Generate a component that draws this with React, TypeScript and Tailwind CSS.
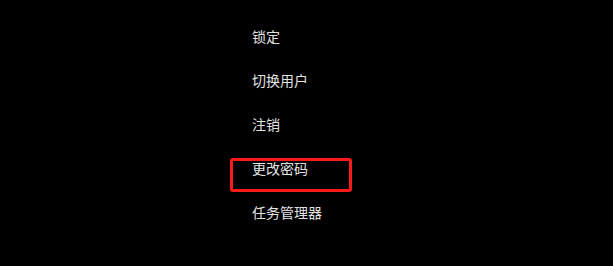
import React from "react";

const items = ["锁定", "切换用户", "注销", "更改密码", "任务管理器"];

export default function App() {
  return (
    <div
      className="w-[613px] h-[266px] bg-black overflow-hidden"
      style={{ fontFamily: '"Noto Sans CJK SC", "Noto Sans", sans-serif' }}
    >
      <ul className="flex flex-col pt-[14px] pl-[252px]">
        {items.map((t) => (
          <li key={t} className="relative h-[44px] flex items-center text-[14px] text-[#e3e3e3] leading-none">
            {t}
            {t === "更改密码" && (
              <span className="absolute left-[-22px] top-[12px] w-[122px] h-[34px] border-[3px] border-[#ff1a1a] rounded-[3px]" />
            )}
          </li>
        ))}
      </ul>
    </div>
  );
}
